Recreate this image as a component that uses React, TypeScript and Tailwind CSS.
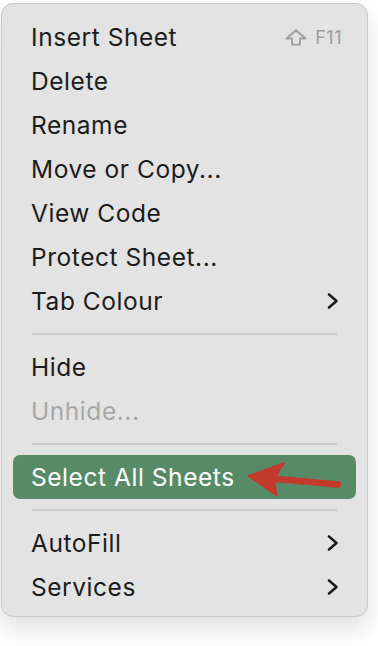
import React from "react";

type Item = {
  label: string;
  shortcut?: boolean;
  submenu?: boolean;
  disabled?: boolean;
  active?: boolean;
};

const sections: Item[][] = [
  [
    { label: "Insert Sheet", shortcut: true },
    { label: "Delete" },
    { label: "Rename" },
    { label: "Move or Copy..." },
    { label: "View Code" },
    { label: "Protect Sheet..." },
    { label: "Tab Colour", submenu: true },
  ],
  [{ label: "Hide" }, { label: "Unhide...", disabled: true }],
  [{ label: "Select All Sheets", active: true }],
  [
    { label: "AutoFill", submenu: true },
    { label: "Services", submenu: true },
  ],
];

const Chevron = () => (
  <svg width="14" height="18" viewBox="0 0 14 18" fill="none" className="mr-[2px]">
    <path d="M3 2.5 L10.5 9 L3 15.5" stroke="#1c1c1c" strokeWidth="2.6" strokeLinecap="round" strokeLinejoin="round" />
  </svg>
);

const ShiftIcon = () => (
  <svg width="22" height="17" viewBox="0 0 22 17" fill="none">
    <path d="M11 1.2 L20.5 9.5 H15 V15.6 H7 V9.5 H1.5 Z" stroke="#9d9d9d" strokeWidth="1.8" strokeLinejoin="round" />
  </svg>
);

const Arrow = () => (
  <svg width="346" height="44" viewBox="0 0 346 44" className="pointer-events-none absolute left-0 top-0" fill="none">
    <path d="M264 24 L325 29.5" stroke="#c23a2c" strokeWidth="6.5" strokeLinecap="round" />
    <path d="M235 21 L271 8 L261 24 L264 41 Z" fill="#c23a2c" strokeLinejoin="round" stroke="#c23a2c" strokeWidth="1.5" />
  </svg>
);

const Row = ({ item }: { item: Item }) => {
  if (item.active) {
    return (
      <div className="relative mx-[11px] flex h-[44px] items-center rounded-[7px] bg-[#578b67] pl-[18px] text-white">
        <span>{item.label}</span>
        <Arrow />
      </div>
    );
  }
  return (
    <div
      className={`flex h-[44px] items-center justify-between pl-[29px] pr-[25px] ${
        item.disabled ? "text-[#a8a8a8]" : "text-[#1c1c1c]"
      }`}
    >
      <span>{item.label}</span>
      {item.shortcut && (
        <span className="flex items-center gap-[8px] text-[18px] tracking-[0.5px] text-[#9d9d9d]">
          <ShiftIcon />
          F11
        </span>
      )}
      {item.submenu && <Chevron />}
    </div>
  );
};

export default function App() {
  return (
    <div className="min-h-[646px] bg-white pl-[1px] pt-[3px]" style={{ fontFamily: "Inter, 'Noto Sans', sans-serif" }}>
      <div className="w-[367px] rounded-[12px] border border-[#c9c9c9] bg-[#e3e3e3] pb-[7px] pt-[11px] text-[24.5px] tracking-[0.55px] shadow-[0_12px_24px_rgba(0,0,0,0.12)]">
        {sections.map((section, i) => (
          <div key={i}>
            {i > 0 && (
              <div className="flex h-[22px] items-center px-[30px]">
                <div className="h-[2px] w-full bg-[#cbcbcb]" />
              </div>
            )}
            {section.map((item) => (
              <Row key={item.label} item={item} />
            ))}
          </div>
        ))}
      </div>
    </div>
  );
}
